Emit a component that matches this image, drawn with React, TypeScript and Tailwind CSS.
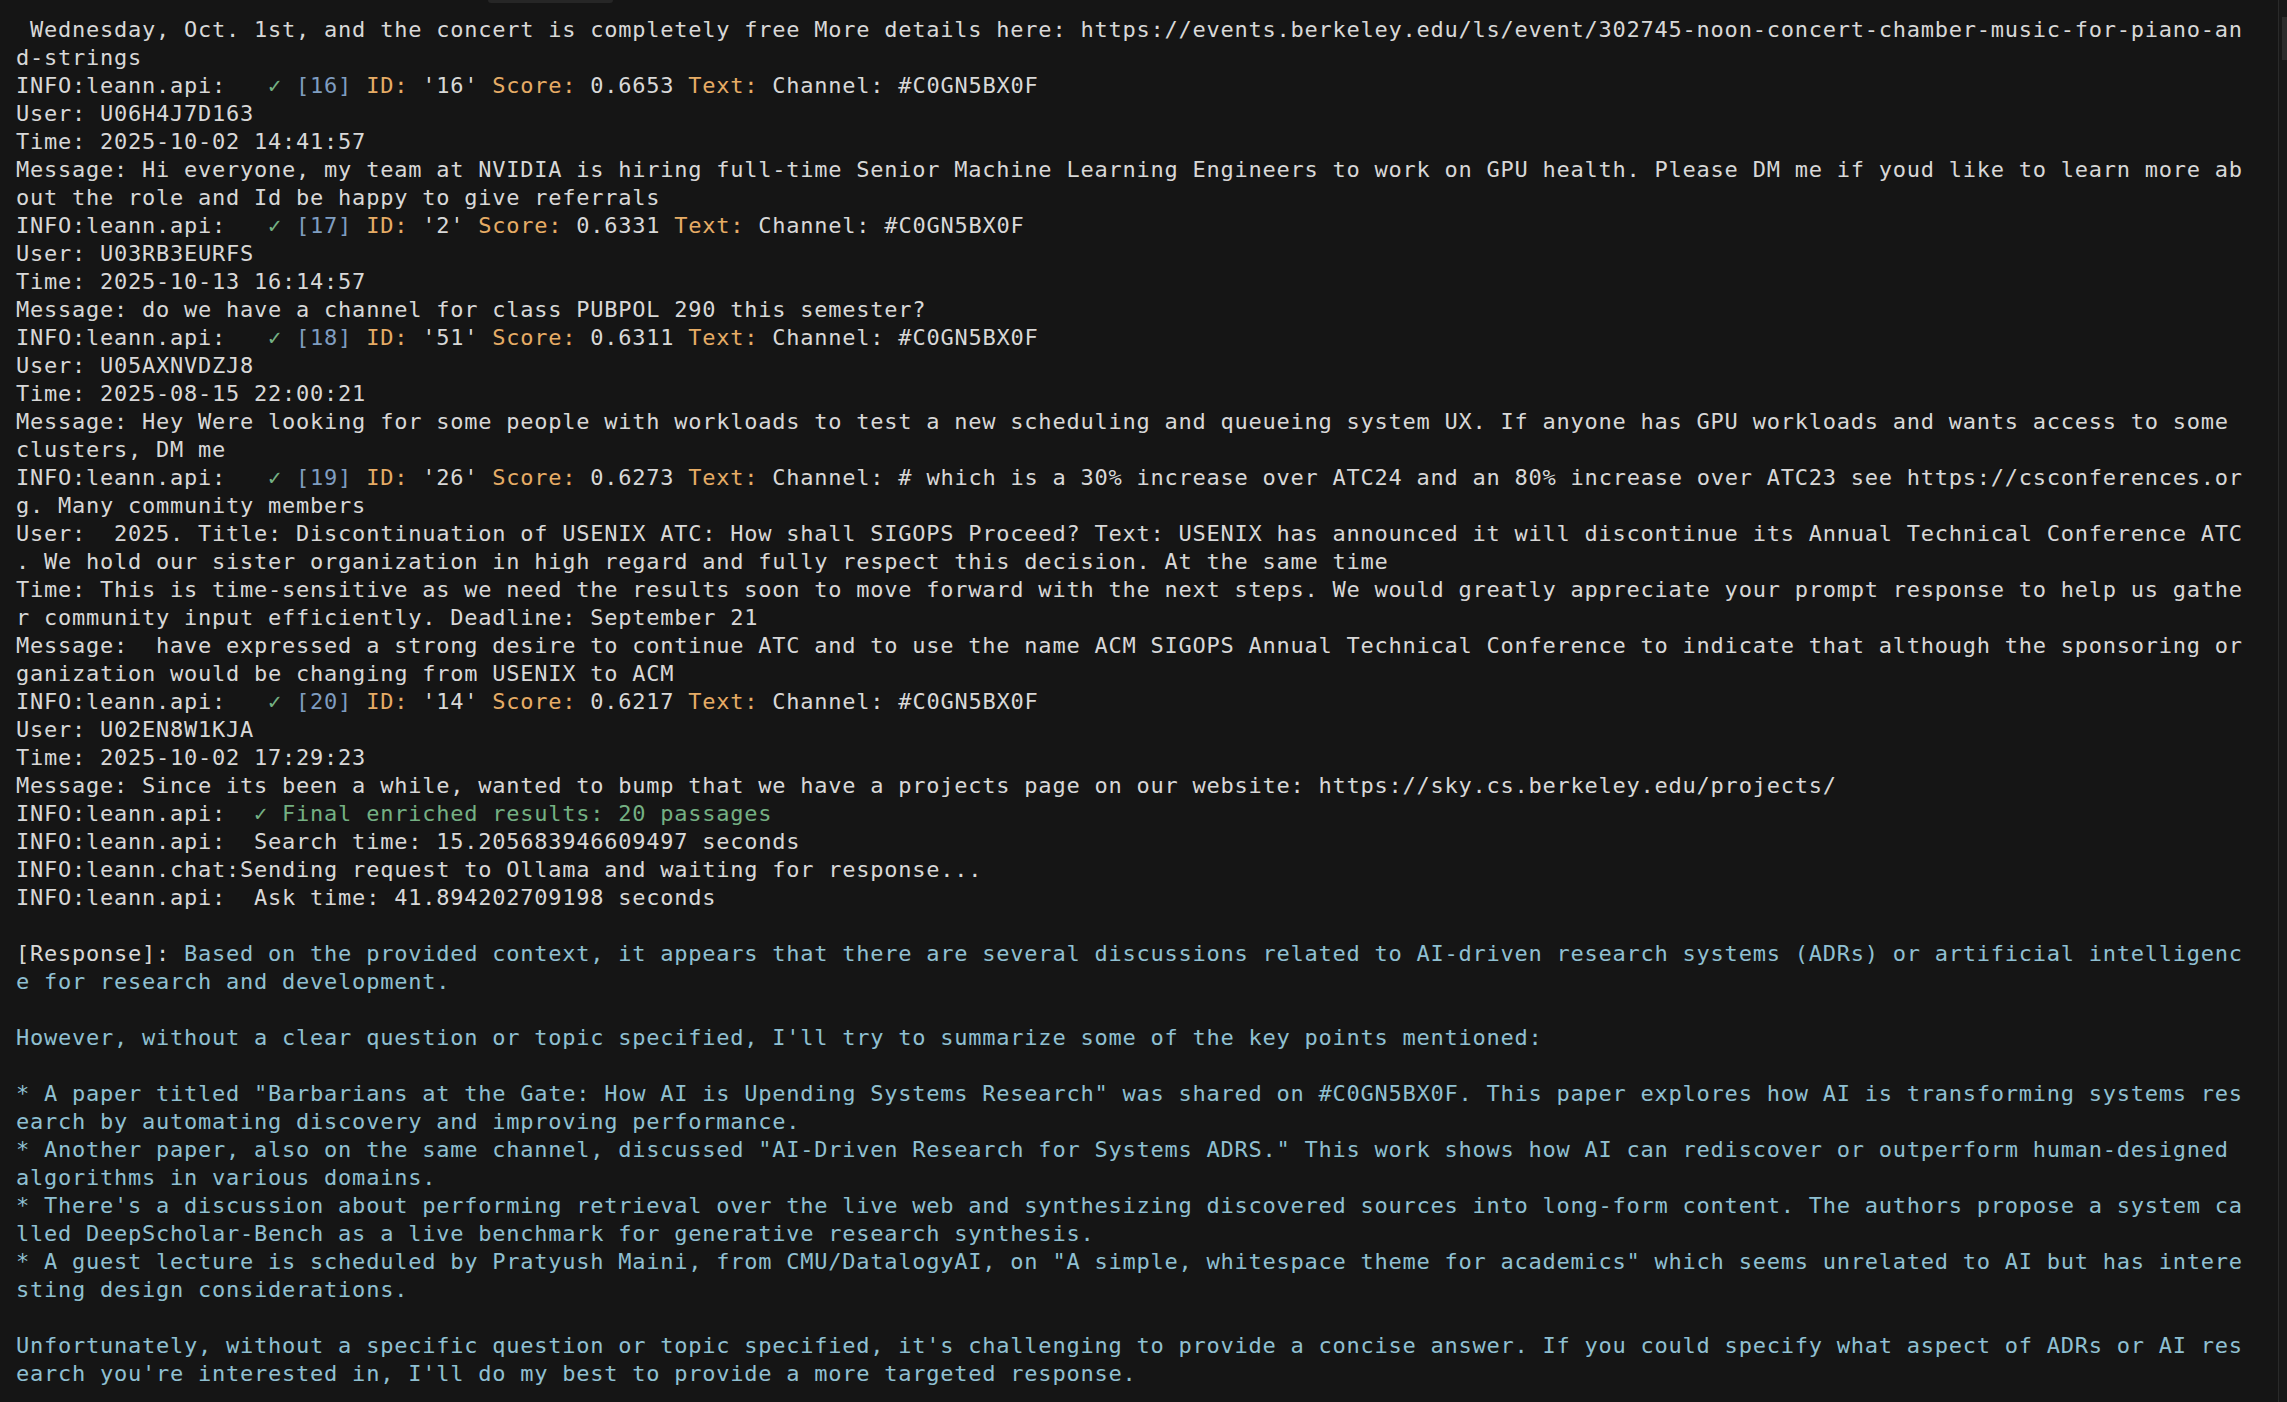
import React from "react";

// --- COLOURS ---
type Tone = "w" | "g" | "b" | "o" | "c";

const toneClass: Record<Tone, string> = {
  w: "text-[#d8d8d8]",
  g: "text-[#74b083]",
  b: "text-[#7f9dc0]",
  o: "text-[#e6ac65]",
  c: "text-[#8fc0d2]",
};

type Seg = [string, Tone];

// --- HELPERS ---
const plain = (t: string): Seg[] => [[t, "w"]];
const resp = (t: string): Seg[] => [[t, "c"]];

const hit = (n: number, id: string, score: string, text: string): Seg[] => [
  ["INFO:leann.api:   ", "w"],
  ["✓ ", "g"],
  [`[${n}] `, "b"],
  ["ID: ", "o"],
  [`'${id}' `, "w"],
  ["Score: ", "o"],
  [`${score} `, "w"],
  ["Text: ", "o"],
  [text, "w"],
];

// --- DATA ---
const lines: Seg[][] = [
  plain(" Wednesday, Oct. 1st, and the concert is completely free More details here: https://events.berkeley.edu/ls/event/302745-noon-concert-chamber-music-for-piano-an"),
  plain("d-strings"),
  hit(16, "16", "0.6653", "Channel: #C0GN5BX0F"),
  plain("User: U06H4J7D163"),
  plain("Time: 2025-10-02 14:41:57"),
  plain("Message: Hi everyone, my team at NVIDIA is hiring full-time Senior Machine Learning Engineers to work on GPU health. Please DM me if youd like to learn more ab"),
  plain("out the role and Id be happy to give referrals"),
  hit(17, "2", "0.6331", "Channel: #C0GN5BX0F"),
  plain("User: U03RB3EURFS"),
  plain("Time: 2025-10-13 16:14:57"),
  plain("Message: do we have a channel for class PUBPOL 290 this semester?"),
  hit(18, "51", "0.6311", "Channel: #C0GN5BX0F"),
  plain("User: U05AXNVDZJ8"),
  plain("Time: 2025-08-15 22:00:21"),
  plain("Message: Hey Were looking for some people with workloads to test a new scheduling and queueing system UX. If anyone has GPU workloads and wants access to some"),
  plain("clusters, DM me"),
  hit(19, "26", "0.6273", "Channel: # which is a 30% increase over ATC24 and an 80% increase over ATC23 see https://csconferences.or"),
  plain("g. Many community members"),
  plain("User:  2025. Title: Discontinuation of USENIX ATC: How shall SIGOPS Proceed? Text: USENIX has announced it will discontinue its Annual Technical Conference ATC"),
  plain(". We hold our sister organization in high regard and fully respect this decision. At the same time"),
  plain("Time: This is time-sensitive as we need the results soon to move forward with the next steps. We would greatly appreciate your prompt response to help us gathe"),
  plain("r community input efficiently. Deadline: September 21"),
  plain("Message:  have expressed a strong desire to continue ATC and to use the name ACM SIGOPS Annual Technical Conference to indicate that although the sponsoring or"),
  plain("ganization would be changing from USENIX to ACM"),
  hit(20, "14", "0.6217", "Channel: #C0GN5BX0F"),
  plain("User: U02EN8W1KJA"),
  plain("Time: 2025-10-02 17:29:23"),
  plain("Message: Since its been a while, wanted to bump that we have a projects page on our website: https://sky.cs.berkeley.edu/projects/"),
  [["INFO:leann.api:  ", "w"], ["✓ Final enriched results: 20 passages", "g"]],
  plain("INFO:leann.api:  Search time: 15.205683946609497 seconds"),
  plain("INFO:leann.chat:Sending request to Ollama and waiting for response..."),
  plain("INFO:leann.api:  Ask time: 41.894202709198 seconds"),
  plain(""),
  [["[Response]: ", "w"], ["Based on the provided context, it appears that there are several discussions related to AI-driven research systems (ADRs) or artificial intelligenc", "c"]],
  resp("e for research and development."),
  resp(""),
  resp("However, without a clear question or topic specified, I'll try to summarize some of the key points mentioned:"),
  resp(""),
  resp("* A paper titled \"Barbarians at the Gate: How AI is Upending Systems Research\" was shared on #C0GN5BX0F. This paper explores how AI is transforming systems res"),
  resp("earch by automating discovery and improving performance."),
  resp("* Another paper, also on the same channel, discussed \"AI-Driven Research for Systems ADRS.\" This work shows how AI can rediscover or outperform human-designed"),
  resp("algorithms in various domains."),
  resp("* There's a discussion about performing retrieval over the live web and synthesizing discovered sources into long-form content. The authors propose a system ca"),
  resp("lled DeepScholar-Bench as a live benchmark for generative research synthesis."),
  resp("* A guest lecture is scheduled by Pratyush Maini, from CMU/DatalogyAI, on \"A simple, whitespace theme for academics\" which seems unrelated to AI but has intere"),
  resp("sting design considerations."),
  resp(""),
  resp("Unfortunately, without a specific question or topic specified, it's challenging to provide a concise answer. If you could specify what aspect of ADRs or AI res"),
  resp("earch you're interested in, I'll do my best to provide a more targeted response."),
];

// --- MAIN COMPONENT ---
export default function App() {
  return (
    <div className="relative flex h-screen w-full overflow-hidden bg-[#151515]">
      {/* tab stub peeking in at the top */}
      <div className="absolute left-[488px] top-0 h-[3px] w-[125px] rounded-b-md bg-[#262626]" />

      <pre className="flex-1 pl-[16px] pt-[16px] font-['DejaVu_Sans_Mono',monospace] text-[22px] leading-[28px] tracking-[0.76px]">
        {lines.map((segs, i) => (
          <div key={i} className="h-[28px] whitespace-pre">
            {segs.map(([t, tone], j) => (
              <span key={j} className={toneClass[tone]}>
                {t}
              </span>
            ))}
          </div>
        ))}
      </pre>

      {/* ── SCROLLBAR ── */}
      <div className="w-[9px] shrink-0 border-l border-[#2a2a2a] bg-[#181818] pl-[3px] pt-[17px]">
        <div className="h-[43px] w-full bg-[#2c2c2c]" />
      </div>
    </div>
  );
}
